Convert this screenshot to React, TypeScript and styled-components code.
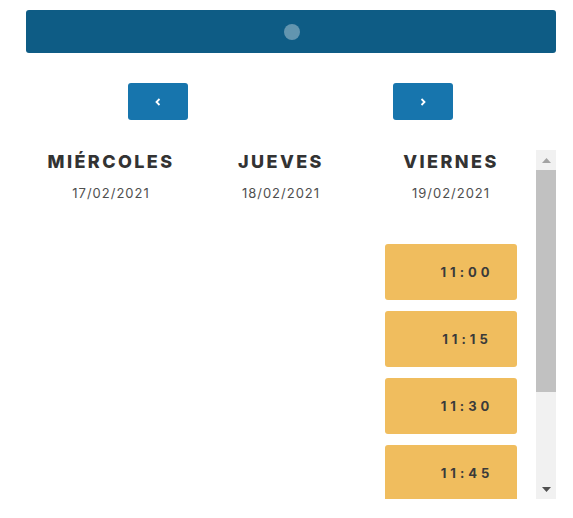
import styled, { createGlobalStyle } from "styled-components";

const GlobalStyle = createGlobalStyle`
  body {
    margin: 0;
    background: #ffffff;
    font-family: Inter, "Noto Sans", "Liberation Sans", sans-serif;
  }
`;

const Page = styled.div`
  width: 530px;
  margin-left: 26px;
  padding-top: 10px;
`;

const TopBar = styled.div`
  height: 43px;
  background: #0e5c85;
  border-radius: 3px;
  display: flex;
  align-items: center;
  justify-content: center;
`;

const Dot = styled.span`
  width: 16px;
  height: 16px;
  border-radius: 50%;
  background: rgba(255, 255, 255, 0.35);
  margin-left: 1px;
`;

const NavRow = styled.div`
  display: flex;
  justify-content: space-between;
  padding: 0 103px 0 102px;
  margin-top: 30px;
`;

const NavButton = styled.button`
  width: 60px;
  height: 37px;
  border: none;
  border-radius: 3px;
  background: #1775ad;
  display: flex;
  align-items: center;
  justify-content: center;
  padding: 0;
  cursor: pointer;
`;

const ScrollFrame = styled.div`
  margin-top: 30px;
  height: 349px;
  display: flex;
`;

const Viewport = styled.div`
  flex: 1;
  overflow: hidden;
`;

const ScrollTrack = styled.div`
  width: 20px;
  background: #f1f1f1;
  display: flex;
  flex-direction: column;
`;

const ScrollArrow = styled.div`
  height: 20px;
  display: flex;
  align-items: center;
  justify-content: center;
`;

const ScrollThumb = styled.div`
  height: 222px;
  background: #c1c1c1;
`;

const ScrollRest = styled.div`
  flex: 1;
`;

const Columns = styled.div`
  display: grid;
  grid-template-columns: repeat(3, 1fr);
`;

const Column = styled.div`
  display: flex;
  flex-direction: column;
  align-items: center;
`;

const DayName = styled.div`
  font-size: 18px;
  font-weight: 800;
  letter-spacing: 2.4px;
  color: #333333;
  line-height: 22px;
  margin-top: 1px;
`;

const DayDate = styled.div`
  font-size: 13px;
  letter-spacing: 1px;
  color: #4f4f4f;
  margin-top: 12px;
  line-height: 16px;
`;

const Slots = styled.div`
  margin-top: 43px;
  display: flex;
  flex-direction: column;
  gap: 11px;
`;

const Slot = styled.div`
  width: 132px;
  height: 56px;
  flex-shrink: 0;
  border-radius: 3px;
  background: #f0bd5e;
  box-sizing: border-box;
  padding-left: 32px;
  display: flex;
  align-items: center;
  justify-content: center;
  font-size: 13px;
  font-weight: 700;
  letter-spacing: 4px;
  color: #3a3a3a;
`;

const Chevron = ({ dir }: { dir: "left" | "right" }) => (
  <svg width="6" height="8" viewBox="0 0 6 8">
    <path
      d={dir === "left" ? "M4.5 1 L1.5 4 L4.5 7" : "M1.5 1 L4.5 4 L1.5 7"}
      fill="none"
      stroke="#ffffff"
      strokeWidth="1.8"
    />
  </svg>
);

const Triangle = ({ up, color }: { up?: boolean; color: string }) => (
  <svg width="9" height="5" viewBox="0 0 9 5">
    <path d={up ? "M0 5 L4.5 0 L9 5 Z" : "M0 0 L4.5 5 L9 0 Z"} fill={color} />
  </svg>
);

// only the slots that are in view; the rest sit below the fold
const days = [
  { name: "MIÉRCOLES", date: "17/02/2021", slots: [] as string[] },
  { name: "JUEVES", date: "18/02/2021", slots: [] as string[] },
  {
    name: "VIERNES",
    date: "19/02/2021",
    slots: ["11:00", "11:15", "11:30", "11:45"],
  },
];

const App = () => {
  return (
    <>
      <GlobalStyle />
      <Page>
        <TopBar>
          <Dot />
        </TopBar>
        <NavRow>
          <NavButton aria-label="anterior">
            <Chevron dir="left" />
          </NavButton>
          <NavButton aria-label="siguiente">
            <Chevron dir="right" />
          </NavButton>
        </NavRow>
        <ScrollFrame>
          <Viewport>
            <Columns>
              {days.map((day) => (
                <Column key={day.name}>
                  <DayName>{day.name}</DayName>
                  <DayDate>{day.date}</DayDate>
                  {day.slots.length > 0 && (
                    <Slots>
                      {day.slots.map((s) => (
                        <Slot key={s}>{s}</Slot>
                      ))}
                    </Slots>
                  )}
                </Column>
              ))}
            </Columns>
          </Viewport>
          <ScrollTrack>
            <ScrollArrow>
              <Triangle up color="#a3a3a3" />
            </ScrollArrow>
            <ScrollThumb />
            <ScrollRest />
            <ScrollArrow>
              <Triangle color="#505050" />
            </ScrollArrow>
          </ScrollTrack>
        </ScrollFrame>
      </Page>
    </>
  );
};

export default App;
